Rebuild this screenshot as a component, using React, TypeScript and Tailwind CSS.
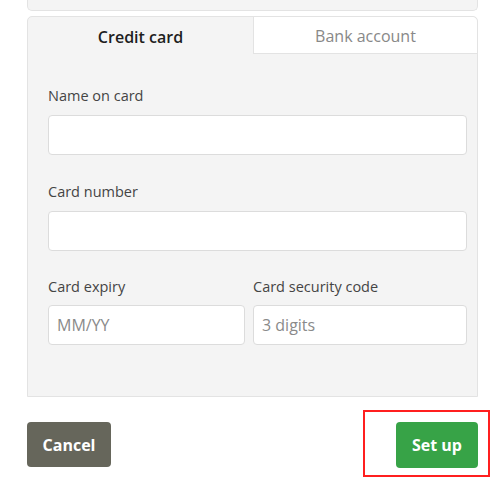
import { useState } from "react";

const inputClass =
  "block h-10 w-full rounded-[4px] border border-[#dcdcdc] bg-white px-[8px] text-[16px] text-[#333] placeholder:text-[#8a8a8a] outline-none";

export default function App() {
  const [tab, setTab] = useState<"card" | "bank">("card");

  return (
    <div className="min-h-screen bg-white font-['Open_Sans',sans-serif]">
      <div className="ml-[27px] w-[451px]">
        <div className="h-[11px] rounded-b-[5px] border-x border-b border-[#e3e3e3] bg-[#f4f4f4]" />

        <div className="mt-[5px] rounded-t-[5px] border border-[#e3e3e3] bg-[#f4f4f4]">
          <div className="flex h-[37px]">
            <button
              onClick={() => setTab("card")}
              className={`w-[225px] pt-[2px] text-[16px] ${tab === "card" ? "font-semibold text-[#1e1e1e]" : "border-b border-[#e3e3e3] bg-white text-[#888]"}`}
            >
              Credit card
            </button>
            <button
              onClick={() => setTab("bank")}
              className={`flex-1 rounded-tr-[5px] border-l border-[#e3e3e3] pt-[2px] text-[16px] ${tab === "bank" ? "font-semibold text-[#1e1e1e]" : "border-b bg-white text-[#888]"}`}
            >
              Bank account
            </button>
          </div>

          <div className="pb-[51px] pl-[20px] pr-[10px] pt-[32px] text-[14.5px] text-[#444]">
            <label className="block leading-5">Name on card</label>
            <input className={`${inputClass} mt-[9px]`} />

            <label className="mt-[27px] block leading-5">Card number</label>
            <input className={`${inputClass} mt-[9px]`} />

            <div className="mt-[26px] grid grid-cols-[197px_1fr] gap-[8px]">
              <div>
                <label className="block leading-5">Card expiry</label>
                <input className={`${inputClass} mt-[8px]`} placeholder="MM/YY" />
              </div>
              <div>
                <label className="block leading-5">Card security code</label>
                <input className={`${inputClass} mt-[8px]`} placeholder="3 digits" />
              </div>
            </div>
          </div>
        </div>

        <div className="mt-[13px] flex items-start justify-between">
          <button className="mt-[12px] h-[45px] w-[84px] rounded-[4px] bg-[#66665b] text-[16px] font-bold text-white">
            Cancel
          </button>
          <div className="-mr-[12px] border-2 border-[#ff1f1f] pb-[7px] pl-[31px] pr-[10px] pt-[10px]">
            <button className="block h-[46px] w-[82px] rounded-[4px] bg-[#37a347] text-[16px] font-bold text-white">
              Set up
            </button>
          </div>
        </div>
      </div>
    </div>
  );
}
